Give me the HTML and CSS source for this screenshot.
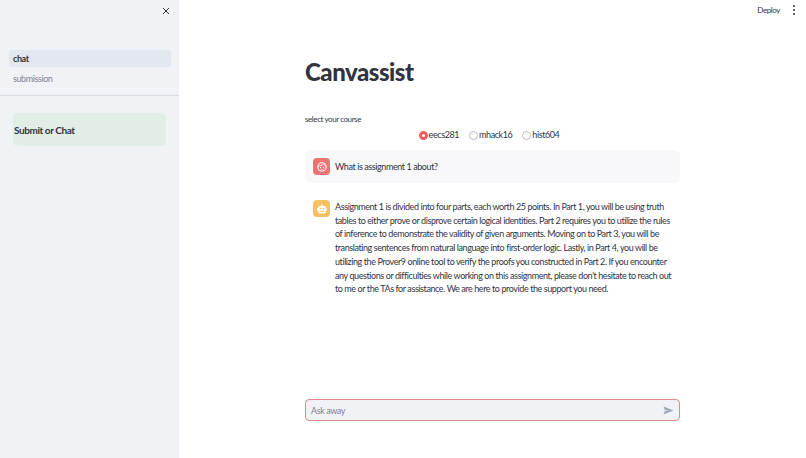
FILE: index.html
```html
<!DOCTYPE HTML>
<html>
    <head>
        <meta name="viewport" content="width=device-width, initial-scale=1.0">
        <title>Canvassist</title>
        <link rel="stylesheet" href="styles.css">
    </head>
    <body>
        <div class="app">
            <div class="sidebar">
                <div class="close-row">
                    <svg class="close" viewBox="0 0 10 10" width="10" height="10"><path d="M2 2L8 8M8 2L2 8" stroke="#31333f" stroke-width="1" fill="none"/></svg>
                </div>
                <ul class="nav">
                    <li class="nav-item active">chat</li>
                    <li class="nav-item">submission</li>
                </ul>
                <div class="side-body">
                    <div class="notice">Submit or Chat</div>
                </div>
            </div>
            <div class="main">
                <div class="topbar">
                    <span class="deploy">Deploy</span>
                    <svg class="more" viewBox="0 0 4 12" width="4" height="12"><circle cx="2" cy="2" r="1" fill="#31333f"/><circle cx="2" cy="6" r="1" fill="#31333f"/><circle cx="2" cy="10" r="1" fill="#31333f"/></svg>
                </div>
                <div class="content">
                    <h1 class="title">Canvassist</h1>
                    <p class="label">select your course</p>
                    <div class="radios">
                        <label class="radio"><span class="dot checked"></span>eecs281</label>
                        <label class="radio"><span class="dot"></span>mhack16</label>
                        <label class="radio"><span class="dot"></span>hist604</label>
                    </div>
                    <div class="msg msg-user">
                        <div class="avatar avatar-user">
                            <svg viewBox="0 0 12 12" width="12" height="12"><circle cx="6" cy="6" r="4.2" fill="none" stroke="#fff" stroke-width="1.1"/><path d="M2.2 5C4 5 6.5 4.6 7.6 2.8C8 3.8 9 4.7 9.9 5" fill="none" stroke="#fff" stroke-width="0.9"/><circle cx="4.6" cy="6.6" r="0.6" fill="#fff"/><circle cx="7.4" cy="6.6" r="0.6" fill="#fff"/><path d="M4.5 8.2C5.2 8.9 6.8 8.9 7.5 8.2" fill="none" stroke="#fff" stroke-width="0.6"/></svg>
                        </div>
                        <p class="msg-text">What is assignment 1 about?</p>
                    </div>
                    <div class="msg msg-bot">
                        <div class="avatar avatar-bot">
                            <svg viewBox="0 0 12 12" width="12" height="12"><rect x="5.5" y="1" width="1" height="2" fill="#fff"/><rect x="2.2" y="3" width="7.6" height="7.5" rx="1.5" fill="#fff"/><rect x="1" y="5.2" width="1.2" height="2.6" fill="#fff"/><rect x="9.8" y="5.2" width="1.2" height="2.6" fill="#fff"/><circle cx="4.5" cy="5.6" r="0.8" fill="#f5c163"/><circle cx="7.5" cy="5.6" r="0.8" fill="#f5c163"/><rect x="4" y="8" width="4" height="0.8" fill="#f5c163"/></svg>
                        </div>
                        <p class="msg-text">Assignment 1 is divided into four parts, each worth 25 points. In Part 1, you will be using truth<br>tables to either prove or disprove certain logical identities. Part 2 requires you to utilize the rules<br>of inference to demonstrate the validity of given arguments. Moving on to Part 3, you will be<br>translating sentences from natural language into first-order logic. Lastly, in Part 4, you will be<br>utilizing the Prover9 online tool to verify the proofs you constructed in Part 2. If you encounter<br>any questions or difficulties while working on this assignment, please don't hesitate to reach out<br>to me or the TAs for assistance. We are here to provide the support you need.</p>
                    </div>
                    <div class="chat-input">
                        <span class="placeholder">Ask away</span>
                        <svg viewBox="0 0 12 10" width="11" height="9"><path d="M0.5 0.5L11.5 5L0.5 9.5L1.8 5.6L6.5 5L1.8 4.4Z" fill="#a3a8b8"/></svg>
                    </div>
                </div>
            </div>
        </div>
    </body>
</html>
```

FILE: styles.css
```css
html,body{
    margin: 0;
    height: 100%;
}
body{
    font-family: Lato, "Noto Sans", Arial, sans-serif;
    letter-spacing: -0.026em;
    color: #31333f;
    background-color: #fff;
}
p,h1,ul{
    margin: 0;
    padding: 0;
}
.app{
    display: flex;
    width: 806px;
    height: 458px;
    overflow: hidden;
}
.sidebar{
    width: 179px;
    flex-shrink: 0;
    background-color: #f0f2f6;
}
.close-row{
    display: flex;
    justify-content: flex-end;
    padding: 6px 8px 0 0;
    height: 44px;
    box-sizing: border-box;
}
.nav{
    list-style: none;
    padding: 6px 8px 5px 9px;
    border-bottom: 1px solid #d9dbe2;
}
.nav-item{
    height: 17px;
    line-height: 17px;
    margin-bottom: 3px;
    padding-left: 4px;
    border-radius: 3px;
    font-size: 9px;
    color: #80838f;
}
.active{
    background-color: #e3e7ee;
    color: #31333f;
    font-weight: 700;
}
.side-body{
    padding: 17px 13px;
}
.notice{
    display: flex;
    align-items: center;
    height: 33px;
    padding-left: 1px;
    background-color: #e0eee6;
    border-radius: 5px;
    font-size: 10px;
    font-weight: 700;
}
.main{
    flex: 1;
    display: flex;
    flex-direction: column;
}
.topbar{
    display: flex;
    justify-content: flex-end;
    align-items: center;
    gap: 12px;
    height: 20px;
    flex-shrink: 0;
    padding-right: 10px;
}
.deploy{
    font-size: 8px;
}
.content{
    flex: 1;
    display: flex;
    flex-direction: column;
    width: 375px;
    margin-left: 126px;
    padding-bottom: 37px;
    box-sizing: border-box;
}
.title{
    margin-top: 37px;
    font-size: 24px;
    line-height: 30px;
    font-weight: 900;
    letter-spacing: -0.02em;
}
.label{
    margin-top: 27px;
    font-size: 8px;
    line-height: 11px;
}
.radios{
    display: flex;
    justify-content: center;
    gap: 10px;
    margin-top: 3px;
    padding-right: 7px;
}
.radio{
    display: flex;
    align-items: center;
    font-size: 9px;
    line-height: 14px;
}
.dot{
    width: 7px;
    height: 7px;
    margin-right: 1px;
    border: 1px solid #b9bcc5;
    border-radius: 50%;
}
.checked{
    width: 3px;
    height: 3px;
    border: 3px solid #e9605c;
    background-color: #fff;
}
.msg{
    display: flex;
    gap: 5px;
    padding: 8px;
    border-radius: 6px;
}
.msg-user{
    align-items: center;
    margin-top: 8px;
    height: 33px;
    box-sizing: border-box;
    background-color: #f8f8fa;
}
.msg-bot{
    margin-top: 9px;
}
.avatar{
    display: flex;
    justify-content: center;
    align-items: center;
    width: 17px;
    height: 17px;
    flex-shrink: 0;
    border-radius: 4px;
}
.avatar-user{
    background-color: #ee7373;
}
.avatar-bot{
    background-color: #f5c163;
}
.msg-text{
    font-size: 9px;
    line-height: 13.7px;
    white-space: nowrap;
}
.chat-input{
    display: flex;
    justify-content: space-between;
    align-items: center;
    margin-top: auto;
    height: 20px;
    padding: 0 5px;
    background-color: #f0f2f6;
    border: 1px solid #e08b8b;
    border-radius: 4px;
}
.placeholder{
    font-size: 9px;
    color: #80838f;
}
```
